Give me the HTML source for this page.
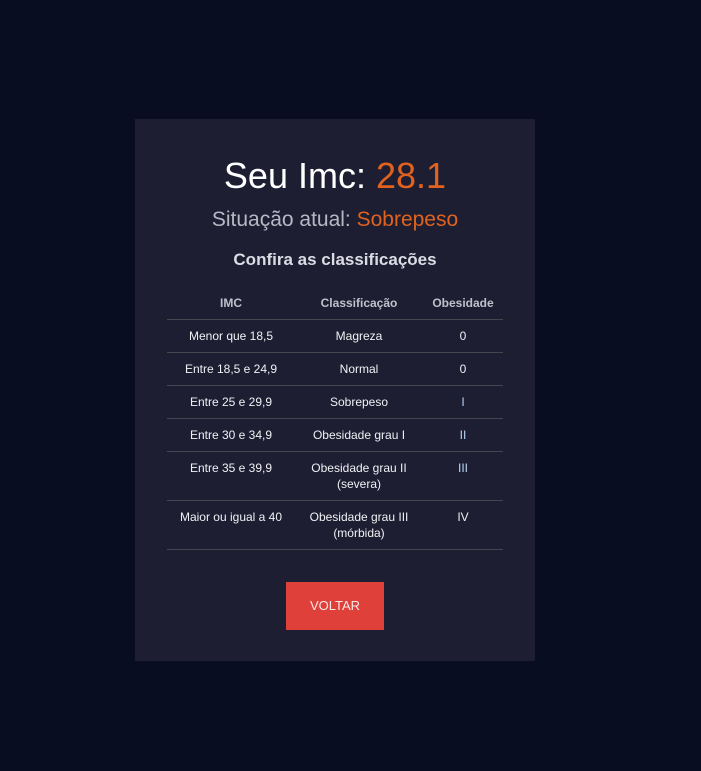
<!DOCTYPE html>
<html><head><meta charset="utf-8"><style>
body{margin:0;background:#090d22;width:701px;height:771px;font-family:"Liberation Sans",sans-serif;position:relative;overflow:hidden}
.card{position:absolute;left:135px;top:119px;width:400px;height:542px;background:#1e1e33}
.t1,.t2,.t3{position:absolute;left:135px;width:400px;text-align:center}
.t1{top:154px;font-size:36px;color:#fff;line-height:44px}
.t1 span,.t2 span{color:#e0621e}
.t2{top:207px;font-size:21px;color:#b8b8c4;line-height:26px}
.t3{top:249px;font-size:17px;font-weight:bold;color:#dcdce4;line-height:22px}
table{position:absolute;left:167px;top:287px;width:336px;border-collapse:collapse;font-size:12px;color:#f0f0f4}
td,th{text-align:center;padding:0;vertical-align:top;border-bottom:1px solid #46464f;line-height:16px}
th{font-weight:bold;color:#c0c0cc;height:32px;line-height:32px}
tr.r td{height:24px;padding-top:8px}
tr.d td{height:40px;padding-top:8px}
td.b{color:#b8d4f4}
.btn{position:absolute;left:286px;top:582px;width:98px;height:48px;background:#e0403a;color:#f4e8e8;font-size:13px;line-height:48px;text-align:center}
</style></head><body>
<div class="card"></div>
<div class="t1">Seu Imc: <span>28.1</span></div>
<div class="t2">Situação atual: <span>Sobrepeso</span></div>
<div class="t3">Confira as classificações</div>
<table>
<colgroup><col style="width:128px"><col style="width:128px"><col style="width:80px"></colgroup>
<tr><th>IMC</th><th>Classificação</th><th>Obesidade</th></tr>
<tr class="r"><td>Menor que 18,5</td><td>Magreza</td><td>0</td></tr>
<tr class="r"><td>Entre 18,5 e 24,9</td><td>Normal</td><td>0</td></tr>
<tr class="r"><td>Entre 25 e 29,9</td><td>Sobrepeso</td><td class="b">I</td></tr>
<tr class="r"><td>Entre 30 e 34,9</td><td>Obesidade grau I</td><td class="b">II</td></tr>
<tr class="d"><td>Entre 35 e 39,9</td><td>Obesidade grau II<br>(severa)</td><td class="b">III</td></tr>
<tr class="d"><td>Maior ou igual a 40</td><td>Obesidade grau III<br>(mórbida)</td><td>IV</td></tr>
</table>
<div class="btn">VOLTAR</div>
</body></html>
